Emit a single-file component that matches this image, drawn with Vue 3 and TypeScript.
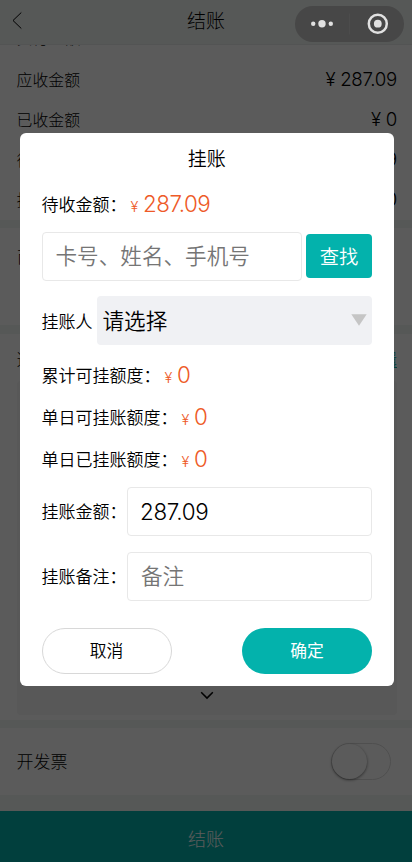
<script setup lang="ts">
import { ref } from 'vue'

interface Amount {
  label: string
  value: string
}

const summary: Amount[] = [
  { label: '实付金额', value: '287.09' },
  { label: '应收金额', value: '287.09' },
  { label: '已收金额', value: '0' },
  { label: '待收金额', value: '287.09' },
  { label: '找零金额', value: '0' },
]

const quotas: Amount[] = [
  { label: '累计可挂额度：', value: '0' },
  { label: '单日可挂账额度：', value: '0' },
  { label: '单日已挂账额度：', value: '0' },
]

const keyword = ref('')
const amount = ref('287.09')
const remark = ref('')
</script>

<template>
  <div class="screen">
    <div class="page">
      <header class="header">
        <svg class="back" width="12" height="20" viewBox="0 0 12 20"><path d="M9.3 1.5 1 9.5 9.3 17.5" fill="none" stroke="#000" stroke-width="1" /></svg>
        <h1>结账</h1>
      </header>
      <section class="summary">
        <div v-for="row in summary" :key="row.label" class="row">
          <span>{{ row.label }}</span>
          <span class="sum"><i>¥</i><b>{{ row.value }}</b></span>
        </div>
      </section>
      <section class="coupon"><span>商品优惠</span></section>
      <section class="methods">
        <div class="methods-head"><span>选择支付方式</span><a>编辑</a></div>
        <div class="fold">
          <svg width="14" height="9" viewBox="0 0 14 9"><path d="M1.2 1.3 7 7.1l5.8-5.8" fill="none" stroke="#000" stroke-width="1.5" /></svg>
        </div>
      </section>
      <section class="invoice">
        <span class="invoice-label">开发票</span>
        <span class="switch"><span class="knob"></span></span>
      </section>
      <footer class="settle">结账</footer>
    </div>

    <div class="scrim"></div>

    <div class="capsule">
      <svg width="109" height="36" viewBox="0 0 109 36">
        <g fill="#e1e1e1">
          <circle cx="18.2" cy="17.7" r="2.2" />
          <circle cx="27" cy="17.7" r="3.7" />
          <circle cx="35.8" cy="17.7" r="2.2" />
          <circle cx="82.8" cy="17.7" r="3.9" />
        </g>
        <path d="M54.5 7.5v21" stroke="#4c4c4c" stroke-width="1" />
        <circle cx="82.8" cy="17.7" r="9" fill="none" stroke="#e1e1e1" stroke-width="2.5" />
      </svg>
    </div>

    <div class="dialog">
      <h2>挂账</h2>
      <p class="due"><span>待收金额：</span><span class="price"><i>¥</i>287.09</span></p>
      <div class="search">
        <input v-model="keyword" class="field" placeholder="卡号、姓名、手机号" />
        <button class="find">查找</button>
      </div>
      <div class="person">
        <span>挂账人</span>
        <div class="select">
          <span>请选择</span>
          <svg width="16" height="12" viewBox="0 0 16 12"><path d="M.3.3h15.4L8 11.7z" fill="#c5c5c5" /></svg>
        </div>
      </div>
      <div class="quotas">
        <p v-for="q in quotas" :key="q.label"><span>{{ q.label }}</span><span class="price"><i>¥</i>{{ q.value }}</span></p>
      </div>
      <label class="line"><span>挂账金额：</span><input v-model="amount" class="field num" /></label>
      <label class="line"><span>挂账备注：</span><input v-model="remark" class="field" placeholder="备注" /></label>
      <div class="actions">
        <button class="cancel">取消</button>
        <button class="confirm">确定</button>
      </div>
    </div>
  </div>
</template>

<style>
body {
  background: #5b5b5b;
}
</style>

<style scoped>
* {
  box-sizing: border-box;
}
.screen {
  position: relative;
  width: 412px;
  height: 862px;
  overflow: hidden;
  font-family: Inter, 'Noto Sans CJK SC', sans-serif;
  font-weight: 300;
  font-size: 17px;
  color: #000;
}
h1, h2, p {
  margin: 0;
  font-weight: inherit;
}
i, b {
  font-style: normal;
  font-weight: inherit;
}
input, button {
  font: inherit;
  margin: 0;
}
.page {
  height: 100%;
  display: flex;
  flex-direction: column;
  background: #f1f5f4;
}
.header {
  flex: none;
  height: 45px;
  padding: 0 12px 0;
  display: grid;
  grid-template-columns: 30px 1fr 30px;
  align-items: center;
  background: #f1f5f4;
  border-bottom: 1px solid #e9ecec;
}
.back {
  margin-bottom: 3px;
}
h1 {
  text-align: center;
  font-size: 19px;
  line-height: 28px;
}
.summary {
  flex: none;
  height: 175px;
  overflow: hidden;
  display: flex;
  flex-direction: column;
  justify-content: flex-end;
  padding: 0 15px 1px 16.5px;
  background: #fff;
}
.row {
  flex: none;
  height: 40px;
  display: flex;
  align-items: center;
  justify-content: space-between;
  font-size: 15.9px;
}
.row:first-child {
  padding-bottom: 3px;
}
.sum {
  display: flex;
  align-items: center;
  gap: 5px;
  font-size: 18.7px;
  letter-spacing: -0.3px;
}
.row:first-child .sum {
  padding-bottom: 3px;
}
.coupon {
  flex: none;
  height: 97px;
  margin-top: 8px;
  padding: 15px 17px;
  background: #fff;
}
.methods {
  flex: 1;
  margin: 9px 0 8px;
  padding: 12px 15px 5px 16.5px;
  display: flex;
  flex-direction: column;
  background: #fff;
}
.methods-head {
  display: flex;
  justify-content: space-between;
}
.methods-head a {
  color: #03b2ac;
  text-decoration: underline;
}
.fold {
  flex: 1;
  margin-top: 10px;
  display: flex;
  align-items: flex-end;
  justify-content: center;
  padding-bottom: 15px;
  border-radius: 4px;
  background: #f5f5f5;
}
.invoice {
  flex: none;
  height: 67px;
  padding: 0 21px 0 16.5px;
  display: flex;
  align-items: center;
  justify-content: space-between;
  background: #fff;
}
.invoice-label {
  padding-bottom: 2px;
}
.switch {
  width: 60px;
  height: 37px;
  border: 1px solid #dcdcdc;
  border-radius: 19px;
}
.knob {
  display: block;
  width: 35px;
  height: 35px;
  border-radius: 50%;
  background: #fff;
  box-shadow: 0 1px 3px rgba(0, 0, 0, 0.5);
}
.settle {
  flex: none;
  height: 51px;
  margin-top: 16px;
  padding-top: 3px;
  display: flex;
  align-items: center;
  justify-content: center;
  font-size: 18px;
  color: #fff;
  background: #03b2ac;
}
.scrim {
  position: absolute;
  inset: 0;
  background: rgba(0, 0, 0, 0.643);
}
.capsule {
  position: absolute;
  left: 295px;
  top: 6px;
  width: 109px;
  height: 36px;
  border-radius: 18px;
  background: #474747;
}
.capsule svg {
  display: block;
}
.dialog {
  position: absolute;
  left: 19.5px;
  top: 133px;
  width: 374.5px;
  height: 552.5px;
  padding: 12px 22px 12px;
  border-radius: 6px;
  background: #fff;
  display: flex;
  flex-direction: column;
  font-weight: 350;
}
h2 {
  text-align: center;
  font-size: 19px;
  line-height: 30px;
  height: 30px;
}
.due {
  height: 40px;
  margin-top: 9px;
  display: flex;
  align-items: center;
}
.due > span:first-child,
.quotas p > span:first-child {
  padding-bottom: 1px;
}
.price {
  display: flex;
  align-items: baseline;
  margin-left: 4px;
  padding-bottom: 1px;
  font-size: 22.4px;
  letter-spacing: -0.5px;
  color: #ee5a28;
}
.price i {
  width: 12.5px;
  font-size: 14.5px;
}
.search {
  margin-top: 8px;
  display: flex;
  align-items: center;
  gap: 4px;
}
.field {
  flex: 1;
  min-width: 0;
  height: 49px;
  padding: 0 13px;
  border: 1px solid #e8e8e8;
  border-radius: 4px;
  background: #fff;
  font-size: 21.6px;
  color: #000;
  outline: none;
}
.field::placeholder {
  color: #757575;
  opacity: 1;
}
.num {
  padding-left: 12px;
  font-size: 22.4px;
  letter-spacing: -0.3px;
}
.find {
  width: 66px;
  height: 44px;
  padding: 0 0 1px;
  border: 0;
  border-radius: 4px;
  background: #03b2ac;
  color: #fff;
  font-size: 19.3px;
  font-weight: 350;
}
.person {
  margin-top: 15px;
  display: flex;
  align-items: center;
  gap: 4px;
}
.select {
  flex: 1;
  height: 49px;
  padding: 0 5px 0 6px;
  display: flex;
  align-items: center;
  justify-content: space-between;
  border-radius: 4px;
  background: #f0f1f4;
  font-size: 21.6px;
}
.select span {
  padding-bottom: 2px;
}
.quotas {
  margin-top: 9px;
}
.quotas p {
  height: 42px;
  display: flex;
  align-items: center;
}
.line {
  margin-top: 16px;
  display: flex;
  align-items: center;
}
.quotas + .line {
  margin-top: 7px;
}
.line span {
  width: 85.5px;
  padding-bottom: 1px;
  white-space: nowrap;
}
.actions {
  margin-top: 27px;
  display: flex;
  justify-content: space-between;
}
.actions button {
  width: 130px;
  height: 46px;
  padding: 0 0 1px;
  border: 0;
  border-radius: 23px;
  font-size: 16.8px;
}
.actions .cancel {
  border: 1px solid #d8d8d8;
  background: #fff;
  color: #000;
}
.actions .confirm {
  background: #03b2ac;
  color: #fff;
  font-weight: 400;
}
</style>
